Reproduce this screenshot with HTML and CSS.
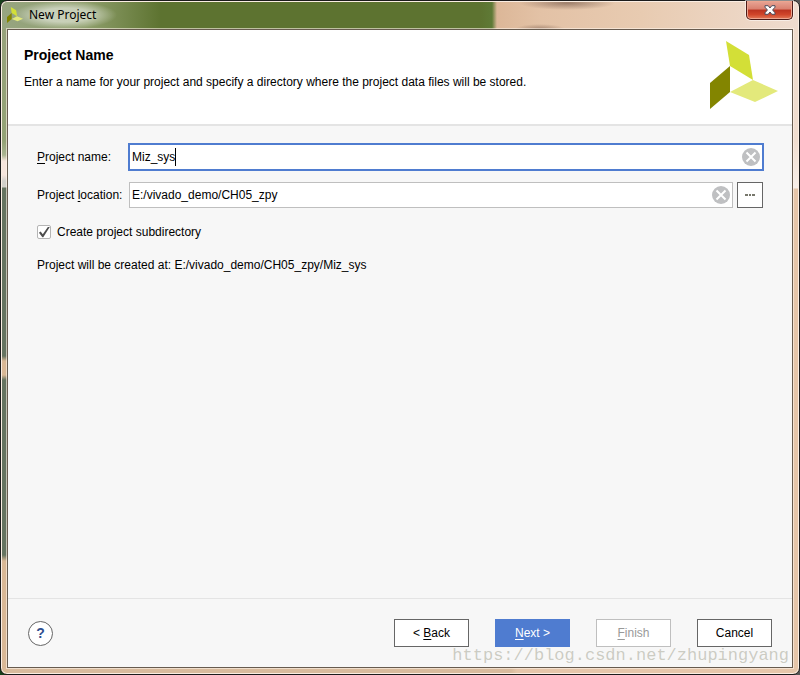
FILE: index.html
```html
<!DOCTYPE html>
<html lang="en">
<head>
<meta charset="utf-8">
<title>New Project</title>
<link rel="stylesheet" href="styles.css">
</head>
<body>
<div class="window">
  <header class="titlebar">
    <svg class="app-icon" viewBox="0 0 68 68" aria-hidden="true">
      <path fill="#d3df37" d="M16 0 39 14 43 39 20 25z"/>
      <path fill="#838500" d="M0 42 20 25V51L0 68z"/>
      <path fill="#e3e97b" d="M20 51 43 39 68 50 45 61z"/>
    </svg>
    <span class="caption">New Project</span>
    <button class="close" type="button" aria-label="Close">
      <svg viewBox="0 0 12 10" aria-hidden="true"><path d="M1 .7H4.200L6 3 7.800.7H11V2.200L8.600 5 11 7.800V9.300H7.800L6 7 4.200 9.300H1V7.800L3.400 5 1 2.200z"/></svg>
    </button>
  </header>
  <form class="client">
    <div class="intro">
      <div>
        <h1>Project Name</h1>
        <p>Enter a name for your project and specify a directory where the project data files will be stored.</p>
      </div>
      <svg class="logo" viewBox="0 0 68 68" aria-hidden="true">
        <path fill="#d3df37" d="M16 0 39 14 43 39 20 25z"/>
        <path fill="#838500" d="M0 42 20 25V51L0 68z"/>
        <path fill="#e3e97b" d="M20 51 43 39 68 50 45 61z"/>
      </svg>
    </div>
    <div class="content">
      <div class="row">
        <label for="name"><u>P</u>roject name:</label>
        <div class="field focused">
          <div class="entry"><input id="name" type="text" value="Miz_sys" size="4"><span class="caret"></span></div>
          <button class="clear" type="button" aria-label="Clear project name"><svg viewBox="0 0 18 18" aria-hidden="true"><circle cx="9" cy="9" r="9"/><path d="M4.500 4.500 13.500 13.500M13.500 4.500 4.500 13.500"/></svg></button>
        </div>
      </div>
      <div class="row">
        <label for="location">Project <u>l</u>ocation:</label>
        <div class="field">
          <input id="location" type="text" value="E:/vivado_demo/CH05_zpy">
          <button class="clear" type="button" aria-label="Clear project location"><svg viewBox="0 0 18 18" aria-hidden="true"><circle cx="9" cy="9" r="9"/><path d="M4.500 4.500 13.500 13.500M13.500 4.500 4.500 13.500"/></svg></button>
        </div>
        <button class="browse" type="button" aria-label="Browse"><svg viewBox="0 0 10 2" aria-hidden="true"><path d="M0 0H3V2H0zM4 0H6V2H4zM7 0H10V2H7z"/></svg></button>
      </div>
      <label class="check"><input type="checkbox" checked><span>Create project subdirectory</span></label>
      <p class="result">Project will be created at: E:/vivado_demo/CH05_zpy/Miz_sys</p>
    </div>
    <footer class="actions">
      <button class="help" type="button">?</button>
      <button class="btn" type="button">&lt; <u>B</u>ack</button>
      <button class="btn primary" type="button"><u>N</u>ext &gt;</button>
      <button class="btn" type="button" disabled><u>F</u>inish</button>
      <button class="btn" type="button">Cancel</button>
    </footer>
  </form>
  <div class="watermark">https://blog.csdn.net/zhupingyang</div>
</div>
</body>
</html>
```

FILE: styles.css
```css
* { box-sizing: border-box; }

body {
  margin: 0;
  background: linear-gradient(90deg, #17401a, #555);
  color: #000;
  font: 12px/16px "Liberation Sans", Arial, sans-serif;
}

h1, p { margin: 0; }
button, input { font: inherit; color: inherit; margin: 0; padding: 0; }
u { text-decoration: underline; text-underline-offset: 2px; text-decoration-skip-ink: none; }

.window {
  position: relative;
  display: flex;
  flex-direction: column;
  min-height: 100vh;
  padding: 0 6px 6px;
  border: 1px solid #1c1c1c;
  border-radius: 7px;
  box-shadow: inset 0 0 0 1px #fbeee3;
  background:
    radial-gradient(ellipse 52px 14px at 50px 50%, rgba(255, 255, 255, .5) 50%, transparent) no-repeat 14px 0 / 110px 28px,
    radial-gradient(closest-side, rgba(110, 80, 65, .6), transparent) no-repeat 518px -5px / 96px 14px,
    radial-gradient(closest-side, rgba(110, 80, 65, .5), transparent) no-repeat 514px 23px / 50px 10px,
    linear-gradient(90deg, #97a581 0, #8f9f6c 85px, #5d7330 160px, #5d7330 480px, #5f7a36 491px, #dcb798 496px, #e3c2a6 540px, #e8cbb1 640px, #efdccf 100%) no-repeat 0 0 / 100% 28px,
    linear-gradient(#97a27b 28px, #93a275 140px, #a9b491 154px, #f6e5dc 160px, #f6e5dc 174px, #d2d0ca 180px, #d2d0ca 186px, #667461 187px, #667461 355px, #d9b896 360px, #d9b896 374px, #667461 379px, #667461 554px, #d9b896 560px) no-repeat 0 0 / 7px 100%,
    linear-gradient(#efdacb, #f0ddcf 140px, #f8efe9 187px, #e5c5a9 188px) no-repeat 100% 0 / 7px 100%,
    linear-gradient(90deg, #d9bb9d 510px, #e6c6aa 516px);
}

.titlebar {
  display: flex;
  align-items: center;
  height: 28px;
  gap: 6px;
}
.app-icon { width: 16px; height: 16px; }
.caption { font: 12px/16px "Noto Sans", sans-serif; }
.close {
  display: flex;
  align-items: center;
  justify-content: center;
  align-self: flex-start;
  width: 47px;
  height: 19px;
  margin-left: auto;
  border: 1px solid #4c1a16;
  border-top: 0;
  border-radius: 0 0 5px 5px;
  box-shadow: inset 0 0 0 1px #eda58f, 0 0 0 1px rgba(255, 255, 255, .5);
  background: linear-gradient(#e9a696, #d9806f 45%, #bb3320 50%, #d0452a 75%, #e37a58);
}
.close svg { width: 12px; height: 10px; overflow: visible; fill: #fff; stroke: #4a4c5c; stroke-width: 1; }

.client {
  display: flex;
  flex: 1;
  flex-direction: column;
  border: 1px solid #675b4f;
  box-shadow: 0 0 0 1px rgba(255, 245, 235, .6);
  background: #f7f7f7;
}

.intro {
  display: flex;
  justify-content: space-between;
  min-height: 96px;
  padding: 11px 14px 14px 16px;
  border-bottom: 2px solid #e4e4e4;
  background: #fff;
}
.intro h1 { margin: 6px 0 11px; font-size: 14px; line-height: 16px; }
.logo { flex: none; width: 68px; height: 68px; }

.content { flex: 1; padding: 17px 28px 0 29px; }
.row { display: flex; align-items: center; height: 28px; margin-bottom: 10px; }
.row label { flex: none; width: 91px; }

.field {
  display: flex;
  flex: 1;
  align-items: center;
  min-width: 0;
  height: 26px;
  margin-left: 1px;
  padding: 0 2px;
  border: 1px solid #bfbfbf;
  background: #fff;
}
.field.focused { height: 28px; margin-left: 0; padding: 0 2px; border: 2px solid #4f7cd0; }
.field input {
  flex: 1;
  min-width: 0;
  height: 20px;
  border: 0;
  outline: 0;
  background: transparent;
}
.entry { display: flex; flex: 1; align-items: center; }
.field .entry input { flex: none; width: 43px; }
.caret { width: 1px; height: 18px; background: #000; }
.clear { display: flex; border: 0; background: transparent; }
.clear svg { width: 18px; height: 18px; fill: #bfc0c2; stroke: #fff; stroke-width: 2; }
.clear circle { stroke: none; }

.browse {
  display: flex;
  align-items: center;
  justify-content: center;
  width: 26px;
  height: 26px;
  margin: 0 1px 0 4px;
  border: 1px solid #666;
  background: #fff;
}
.browse svg { width: 10px; height: 2px; fill: #77776c; }

.check { display: flex; align-items: center; gap: 6px; width: max-content; margin-top: 15px; }
.check input {
  width: 14px;
  height: 14px;
  border: 1px solid #b5b5b5;
  border-radius: 2px;
  appearance: none;
  background: #fff;
}
.check input:checked::before {
  content: "";
  display: block;
  width: 12px;
  height: 12px;
  background: #4d4d4d;
  clip-path: polygon(8% 56%, 22% 46%, 40% 68%, 82% 8%, 98% 8%, 44% 94%, 36% 94%);
}
.result { margin-top: 17px; }

.actions {
  display: flex;
  align-items: center;
  gap: 26px;
  height: 69px;
  padding: 0 20px;
  border-top: 1px solid #e4e4e4;
}
.help {
  width: 25px;
  height: 25px;
  margin-right: auto;
  border: 1px solid #666;
  border-radius: 50%;
  background: #fff;
  color: #2f4f8f;
  font-size: 14px;
  font-weight: bold;
}
.btn { width: 75px; height: 28px; border: 1px solid #666; background: #fff; }
.primary { border-color: #4f7cd0; background: #4f7cd0; color: #fff; }
.btn:disabled { border-color: #bfbfbf; color: #999; }

.watermark {
  position: absolute;
  right: 10px;
  bottom: 7px;
  color: rgba(150, 150, 130, .45);
  font: 17px/22px "Liberation Mono", monospace;
  pointer-events: none;
}
```
